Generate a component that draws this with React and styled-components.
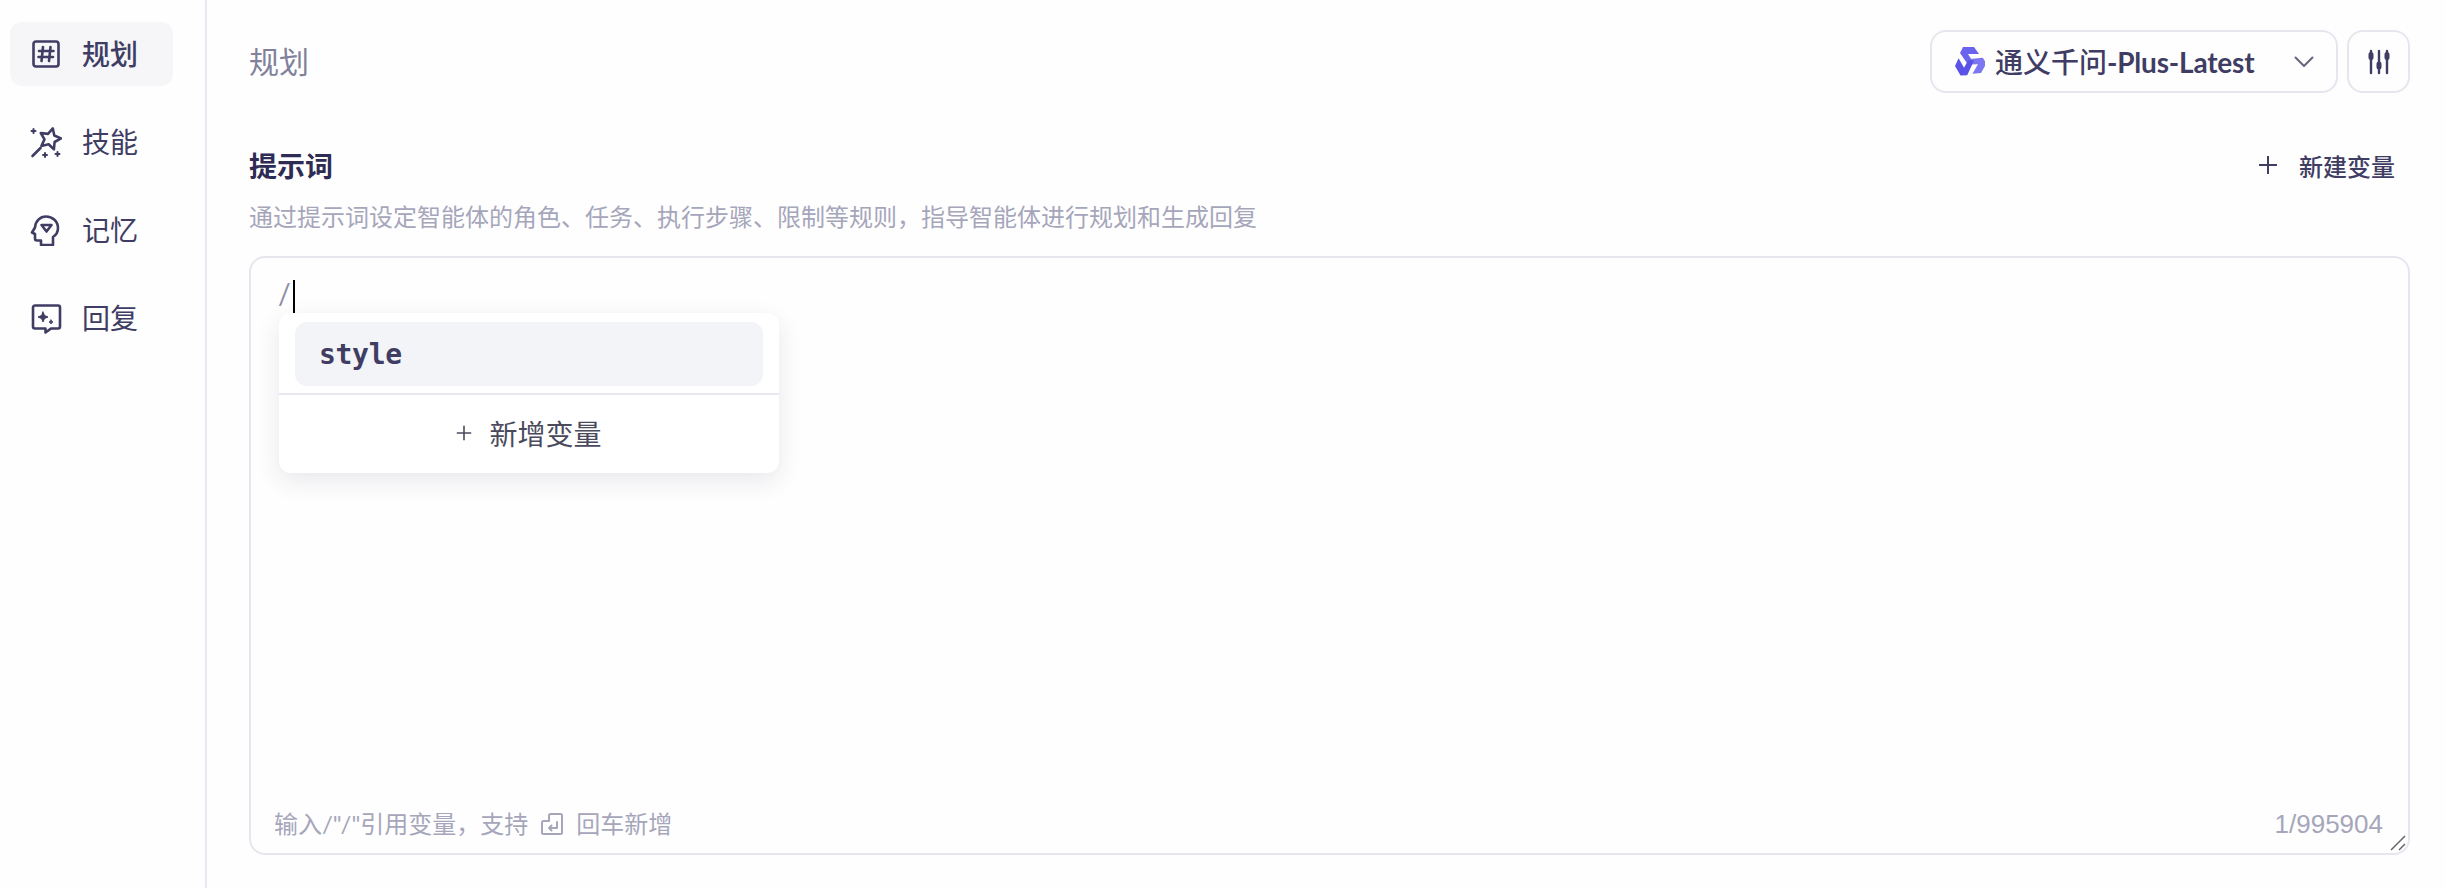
import React from 'react';
import styled, { createGlobalStyle } from 'styled-components';

const GlobalStyle = createGlobalStyle`
  html, body {
    margin: 0;
    padding: 0;
    background: #fefefe;
  }
  * {
    box-sizing: border-box;
  }
`;

const FONT = `Lato, "Noto Sans CJK SC", sans-serif`;

const Page = styled.div`
  display: flex;
  width: 2446px;
  height: 888px;
  overflow: hidden;
  font-family: ${FONT};
  background: #fefefe;
`;

const Sidebar = styled.nav`
  flex: 0 0 207px;
  border-right: 2px solid #e8e8f0;
  padding: 22px 0 0 10px;
  display: flex;
  flex-direction: column;
  gap: 24px;
`;

const NavItem = styled.div`
  width: 163px;
  height: 64px;
  border-radius: 12px;
  background: ${(p) => (p.$active ? '#f6f6f9' : 'transparent')};
  display: flex;
  align-items: center;
  padding-left: 20px;
  gap: 20px;
  font-size: 28px;
  line-height: 62px;
  padding-bottom: 1px;
  font-weight: ${(p) => (p.$active ? 500 : 400)};
  color: #3f3d63;
  svg {
    flex: 0 0 32px;
  }
`;

const Main = styled.main`
  flex: 1;
  padding: 30px 36px 33px 42px;
  display: flex;
  flex-direction: column;
`;

const TopRow = styled.header`
  height: 63px;
  display: flex;
  align-items: center;
  justify-content: space-between;
`;

const Title = styled.h1`
  margin: 0 0 3px;
  font-size: 30px;
  font-weight: 400;
  color: #81819b;
`;

const ModelControls = styled.div`
  display: flex;
  gap: 9px;
`;

const ModelSelect = styled.div`
  width: 408px;
  height: 63px;
  border: 2px solid #e6e6ef;
  border-radius: 16px;
  display: flex;
  align-items: center;
  padding: 0 22px 0 23px;
  gap: 10px;
  font-size: 28px;
  font-weight: 500;
  color: #3f3d63;
`;

const ModelName = styled.span`
  flex: 1;
  white-space: nowrap;
  margin-bottom: 2px;
`;

const LatinPart = styled.b`
  font-weight: 700;
  letter-spacing: -0.2px;
`;

const IconButton = styled.div`
  width: 63px;
  height: 63px;
  border: 2px solid #e6e6ef;
  border-radius: 16px;
  display: flex;
  align-items: center;
  justify-content: center;
`;

const PromptHeader = styled.div`
  margin-top: 51px;
  height: 42px;
  display: flex;
  align-items: center;
  justify-content: space-between;
`;

const PromptTitle = styled.h2`
  margin: 0;
  font-size: 28px;
  font-weight: 700;
  color: #2e2c55;
`;

const NewVariable = styled.div`
  display: flex;
  align-items: center;
  gap: 21px;
  padding-right: 15px;
  font-size: 24px;
  font-weight: 500;
  color: #3f3d63;
`;

const Description = styled.p`
  margin: 14px 0 0;
  line-height: 34px;
  font-size: 24px;
  color: #a6a6bb;
`;

const EditorBox = styled.section`
  position: relative;
  flex: 1;
  margin-top: 22px;
  border: 2px solid #e6e6ef;
  border-radius: 16px;
  padding: 16px 25px 13px 23px;
  display: flex;
  flex-direction: column;
`;

const EditorLine = styled.div`
  flex: 1;
  display: flex;
  align-items: flex-start;
  margin-left: 4px;
  font-size: 28px;
  line-height: 38px;
  color: #8d8da6;
`;

const Caret = styled.i`
  display: block;
  width: 2px;
  height: 33px;
  margin: 6px 0 0 2px;
  background: #000;
`;

const Footer = styled.footer`
  display: flex;
  align-items: center;
  justify-content: space-between;
  font-size: 24px;
  line-height: 32px;
  color: #a6a6bb;
`;

const Hint = styled.div`
  display: flex;
  align-items: center;
  gap: 12px;
`;

const Counter = styled.span`
  font-family: "Liberation Sans", sans-serif;
  font-size: 26px;
`;

const ResizeHandle = styled.svg`
  position: absolute;
  right: 2px;
  bottom: 2px;
`;

const Popup = styled.div`
  position: absolute;
  left: 28px;
  top: 55px;
  width: 500px;
  height: 160px;
  border-radius: 12px;
  background: #fff;
  box-shadow: 0 8px 24px rgba(40, 40, 80, 0.1);
  display: flex;
  flex-direction: column;
`;

const PopupList = styled.div`
  padding: 9px 16px 7px;
  border-bottom: 2px solid #e8e8f0;
`;

const VariableOption = styled.div`
  height: 64px;
  border-radius: 12px;
  background: #f3f4f7;
  display: flex;
  align-items: center;
  padding-left: 24px;
  font-family: "DejaVu Sans Mono", "Liberation Mono", monospace;
  font-size: 28px;
  font-weight: 700;
  letter-spacing: -0.3px;
  color: #3f3d63;
`;

const AddOption = styled.div`
  flex: 1;
  display: flex;
  align-items: center;
  justify-content: center;
  gap: 17px;
  padding-bottom: 2px;
  font-size: 28px;
  color: #4a4a5c;
`;

const Stroke = ({ size = 32, view = 32, width = 2.6, color = '#3f3d63', children }) => (
  <svg width={size} height={size} viewBox={`0 0 ${view} ${view}`} fill='none' stroke={color} strokeWidth={width} strokeLinecap='round' strokeLinejoin='round'>
    {children}
  </svg>
);

const GridIcon = () => (
  <Stroke>
    <rect x='3.500' y='3.500' width='25' height='25' rx='2.500' />
    <path d='M13 9l-1.500 14M20.500 9L19 23M9 13h14.500M8.500 19h14.500' />
  </Stroke>
);

const WandIcon = () => (
  <Stroke>
    <path d='M22.800 2.400L24.300 9.500 31 12.400 24.600 16 23.900 23.300 18.600 18.300 11.500 19.900 14.500 13.300 10.800 7 18 7.900z' />
    <path d='M2.500 30l8-8' />
    <path d='M3.500 3v4M1.500 5h4M27.500 26v4M25.500 28h4M15 27v4M13 29h4' strokeWidth='2' />
  </Stroke>
);

const HeadIcon = () => (
  <Stroke>
    <path d='M11 31v-4.500H7a2 2 0 0 1-2-2V20l-3-1.500 3-5C5.500 7 10 2.500 16 2.500c6.500 0 12 5 12 11.500 0 4-1.800 7-5 9v8z' />
    <path d='M11.500 11h10l-5 6.500z' />
  </Stroke>
);

const ReplyIcon = () => (
  <Stroke>
    <path d='M5 3.500h23a2 2 0 0 1 2 2v19a2 2 0 0 1-2 2h-7l-5.500 4v-4H5a2 2 0 0 1-2-2v-19a2 2 0 0 1 2-2z' />
    <path d='M13 10l1.500 3.500L18 15l-3.500 1.500L13 20l-1.500-3.500L8 15l3.500-1.500zM21 18l.6 1.400L23 20l-1.400.6L21 22l-.6-1.400L19 20l1.400-.6z' fill='#3f3d63' strokeWidth='1' />
  </Stroke>
);

const LOGO_BAND = 'M8 1h11l5 7H13l5 8-4 4-9-13z';

const QwenLogo = () => (
  <svg width='30' height='32' viewBox='0 0 30 32'>
    <path d={LOGO_BAND} fill='#6a63ee' />
    <path d={LOGO_BAND} fill='#7d76f3' transform='rotate(120 15 16)' />
    <path d={LOGO_BAND} fill='#5a53e6' transform='rotate(240 15 16)' />
  </svg>
);

const Chevron = () => (
  <svg width='20' height='12' viewBox='0 0 20 12' fill='none' stroke='#66667f' strokeWidth='2' strokeLinecap='round' strokeLinejoin='round'>
    <path d='M1.500 1.500L10 10l8.500-8.500' />
  </svg>
);

const SlidersIcon = () => (
  <svg width='24' height='26' viewBox='0 0 24 26' fill='none' stroke='#3f3d63' strokeWidth='2.400' strokeLinecap='round'>
    <path d='M4 2v22M12 2v22M20 2v22' />
    <path d='M4 5.500v3M12 15v3M20 5.500v3' strokeWidth='5' />
  </svg>
);

const PlusIcon = ({ size = 20, color = '#3f3d63' }) => (
  <svg width={size} height={size} viewBox='0 0 20 20' fill='none' stroke={color} strokeWidth='2'>
    <path d='M10 1v18M1 10h18' />
  </svg>
);

const EnterIcon = () => (
  <Stroke size={24} view={24} width={2} color='#a6a6bb'>
    <path d='M9 9V3.500A1.500 1.500 0 0 1 10.500 2h10A1.500 1.500 0 0 1 22 3.500v17a1.500 1.500 0 0 1-1.500 1.500h-17A1.500 1.500 0 0 1 2 20.500v-10A1.500 1.500 0 0 1 3.500 9z' />
    <path d='M17 10v6H9M11.500 13.500L9 16l2.500 2.500' />
  </Stroke>
);

const App = () => {
  const navItems = [
    { label: '规划', icon: <GridIcon />, active: true },
    { label: '技能', icon: <WandIcon /> },
    { label: '记忆', icon: <HeadIcon /> },
    { label: '回复', icon: <ReplyIcon /> },
  ];

  return (
    <Page>
      <GlobalStyle />
      <Sidebar>
        {navItems.map((item) => (
          <NavItem key={item.label} $active={item.active}>
            {item.icon}
            {item.label}
          </NavItem>
        ))}
      </Sidebar>
      <Main>
        <TopRow>
          <Title>规划</Title>
          <ModelControls>
            <ModelSelect>
              <QwenLogo />
              <ModelName>
                通义千问<LatinPart>-Plus-Latest</LatinPart>
              </ModelName>
              <Chevron />
            </ModelSelect>
            <IconButton>
              <SlidersIcon />
            </IconButton>
          </ModelControls>
        </TopRow>
        <PromptHeader>
          <PromptTitle>提示词</PromptTitle>
          <NewVariable>
            <PlusIcon />
            新建变量
          </NewVariable>
        </PromptHeader>
        <Description>{'通过提示词设定智能体的角色、任务、执行步骤、限制等规则\uFF0C指导智能体进行规划和生成回复'}</Description>
        <EditorBox>
          <EditorLine>
            /<Caret />
          </EditorLine>
          <Footer>
            <Hint>
              <span>{'输入/"/"引用变量\uFF0C支持'}</span>
              <EnterIcon />
              <span>回车新增</span>
            </Hint>
            <Counter>1/995904</Counter>
          </Footer>
          <Popup>
            <PopupList>
              <VariableOption>style</VariableOption>
            </PopupList>
            <AddOption>
              <PlusIcon size={16} color='#4a4a5c' />
              新增变量
            </AddOption>
          </Popup>
          <ResizeHandle width='16' height='16' viewBox='0 0 16 16' fill='none' stroke='#66666c' strokeWidth='1.500'>
            <path d='M1 15L15 1M9 15l6-6' />
          </ResizeHandle>
        </EditorBox>
      </Main>
    </Page>
  );
};

export default App;
